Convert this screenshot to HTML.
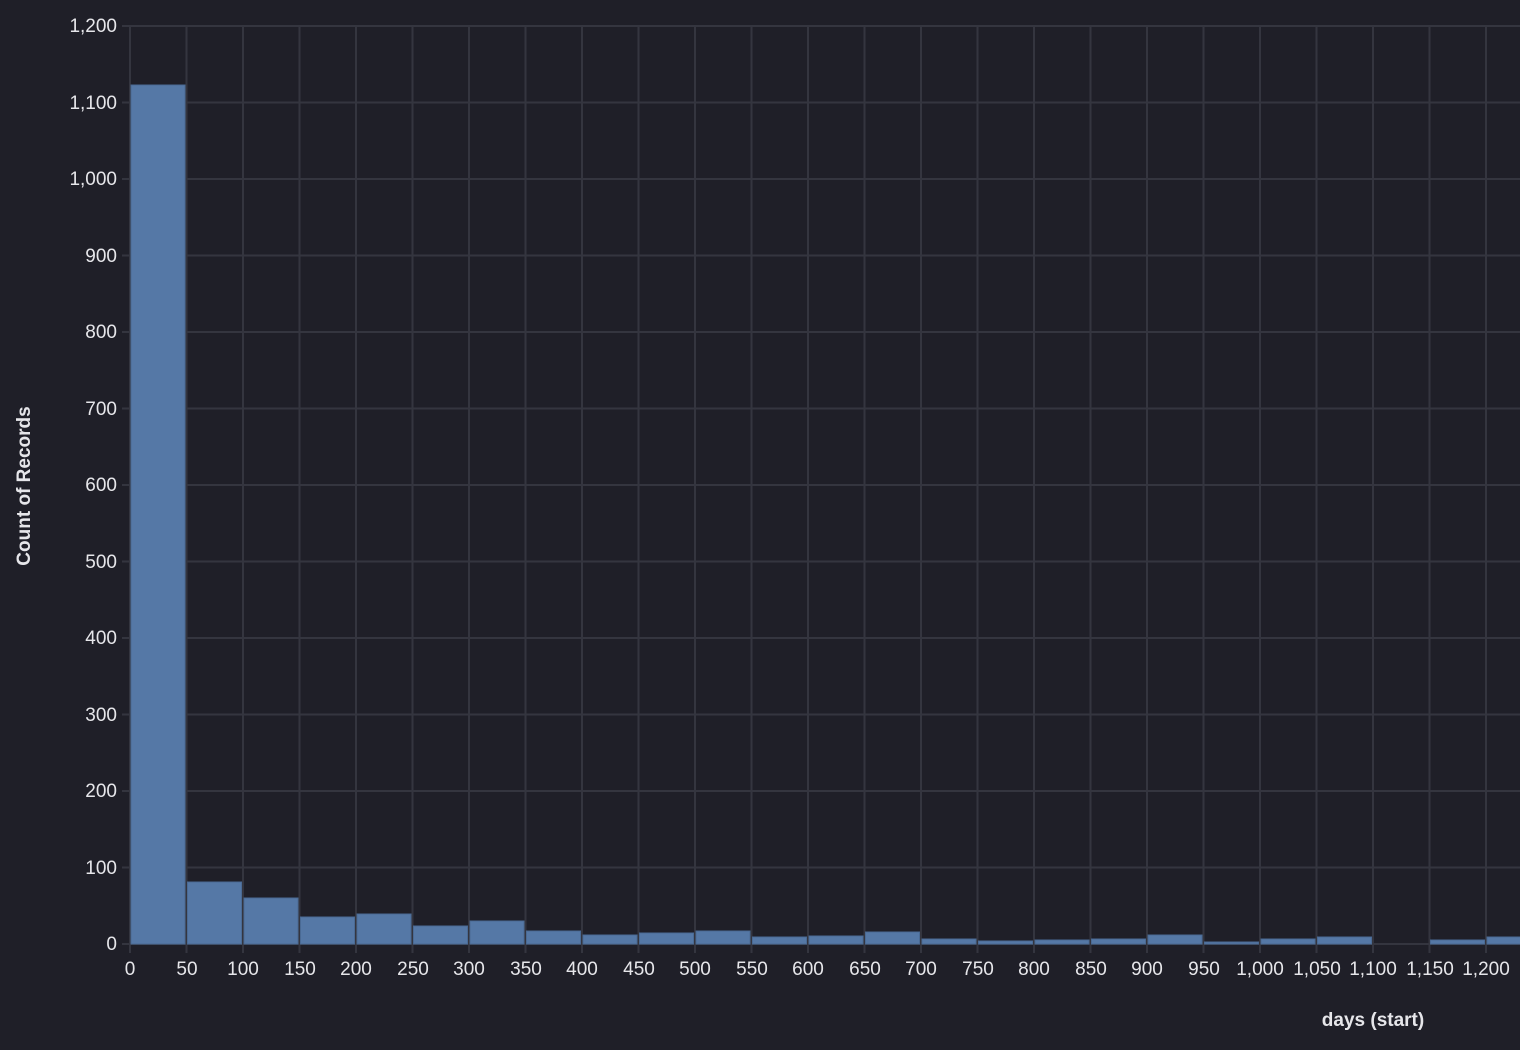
<!DOCTYPE html>
<html><head><style>
html,body{margin:0;padding:0;background:#1f1f28;}
svg{display:block;font-family:"Liberation Sans",sans-serif;}
</style></head><body>
<svg width="1520" height="1050" viewBox="0 0 1520 1050">
<rect width="1520" height="1050" fill="#1f1f28"/>
<g stroke="#34353f" stroke-width="2">
<line x1="130" y1="26" x2="1520" y2="26"/><line x1="130" y1="102.5" x2="1520" y2="102.5"/><line x1="130" y1="179" x2="1520" y2="179"/><line x1="130" y1="255.5" x2="1520" y2="255.5"/><line x1="130" y1="332" x2="1520" y2="332"/><line x1="130" y1="408.5" x2="1520" y2="408.5"/><line x1="130" y1="485" x2="1520" y2="485"/><line x1="130" y1="561.5" x2="1520" y2="561.5"/><line x1="130" y1="638" x2="1520" y2="638"/><line x1="130" y1="714.5" x2="1520" y2="714.5"/><line x1="130" y1="791" x2="1520" y2="791"/><line x1="130" y1="867.5" x2="1520" y2="867.5"/>
<line x1="122" y1="26" x2="130" y2="26"/><line x1="122" y1="102.5" x2="130" y2="102.5"/><line x1="122" y1="179" x2="130" y2="179"/><line x1="122" y1="255.5" x2="130" y2="255.5"/><line x1="122" y1="332" x2="130" y2="332"/><line x1="122" y1="408.5" x2="130" y2="408.5"/><line x1="122" y1="485" x2="130" y2="485"/><line x1="122" y1="561.5" x2="130" y2="561.5"/><line x1="122" y1="638" x2="130" y2="638"/><line x1="122" y1="714.5" x2="130" y2="714.5"/><line x1="122" y1="791" x2="130" y2="791"/><line x1="122" y1="867.5" x2="130" y2="867.5"/><line x1="122" y1="944" x2="1520" y2="944"/>
<line x1="130.0" y1="26" x2="130.0" y2="953"/><line x1="186.5" y1="26" x2="186.5" y2="953"/><line x1="243.0" y1="26" x2="243.0" y2="953"/><line x1="299.5" y1="26" x2="299.5" y2="953"/><line x1="356.0" y1="26" x2="356.0" y2="953"/><line x1="412.5" y1="26" x2="412.5" y2="953"/><line x1="469.0" y1="26" x2="469.0" y2="953"/><line x1="525.5" y1="26" x2="525.5" y2="953"/><line x1="582.0" y1="26" x2="582.0" y2="953"/><line x1="638.5" y1="26" x2="638.5" y2="953"/><line x1="695.0" y1="26" x2="695.0" y2="953"/><line x1="751.5" y1="26" x2="751.5" y2="953"/><line x1="808.0" y1="26" x2="808.0" y2="953"/><line x1="864.5" y1="26" x2="864.5" y2="953"/><line x1="921.0" y1="26" x2="921.0" y2="953"/><line x1="977.5" y1="26" x2="977.5" y2="953"/><line x1="1034.0" y1="26" x2="1034.0" y2="953"/><line x1="1090.5" y1="26" x2="1090.5" y2="953"/><line x1="1147.0" y1="26" x2="1147.0" y2="953"/><line x1="1203.5" y1="26" x2="1203.5" y2="953"/><line x1="1260.0" y1="26" x2="1260.0" y2="953"/><line x1="1316.5" y1="26" x2="1316.5" y2="953"/><line x1="1373.0" y1="26" x2="1373.0" y2="953"/><line x1="1429.5" y1="26" x2="1429.5" y2="953"/><line x1="1486.0" y1="26" x2="1486.0" y2="953"/>
</g>
<g fill="#5578a6" stroke="#4a6a94" stroke-width="1">
<rect x="131" y="85" width="54" height="859"/>
<rect x="187.5" y="882" width="54" height="62"/>
<rect x="244" y="898" width="54" height="46"/>
<rect x="300.5" y="917" width="54" height="27"/>
<rect x="357" y="914" width="54" height="30"/>
<rect x="413.5" y="926" width="54" height="18"/>
<rect x="470" y="921" width="54" height="23"/>
<rect x="526.5" y="931" width="54" height="13"/>
<rect x="583" y="935" width="54" height="9"/>
<rect x="639.5" y="933" width="54" height="11"/>
<rect x="696" y="931" width="54" height="13"/>
<rect x="752.5" y="937" width="54" height="7"/>
<rect x="809" y="936" width="54" height="8"/>
<rect x="865.5" y="932" width="54" height="12"/>
<rect x="922" y="939" width="54" height="5"/>
<rect x="978.5" y="941" width="54" height="3"/>
<rect x="1035" y="940" width="54" height="4"/>
<rect x="1091.5" y="939" width="54" height="5"/>
<rect x="1148" y="935" width="54" height="9"/>
<rect x="1204.5" y="942" width="54" height="2"/>
<rect x="1261" y="939" width="54" height="5"/>
<rect x="1317.5" y="937" width="54" height="7"/>
<rect x="1430.5" y="940" width="54" height="4"/>
<rect x="1487" y="937" width="54" height="7"/>
</g>
<g fill="#e6e6ea" font-size="19" text-anchor="end">
<text x="117" y="32">1,200</text><text x="117" y="109">1,100</text><text x="117" y="185">1,000</text><text x="117" y="262">900</text><text x="117" y="338">800</text><text x="117" y="415">700</text><text x="117" y="491">600</text><text x="117" y="568">500</text><text x="117" y="644">400</text><text x="117" y="721">300</text><text x="117" y="797">200</text><text x="117" y="874">100</text><text x="117" y="950">0</text>
</g>
<g fill="#e6e6ea" font-size="19" text-anchor="middle">
<text x="130" y="975">0</text><text x="187" y="975">50</text><text x="243" y="975">100</text><text x="300" y="975">150</text><text x="356" y="975">200</text><text x="413" y="975">250</text><text x="469" y="975">300</text><text x="526" y="975">350</text><text x="582" y="975">400</text><text x="639" y="975">450</text><text x="695" y="975">500</text><text x="752" y="975">550</text><text x="808" y="975">600</text><text x="865" y="975">650</text><text x="921" y="975">700</text><text x="978" y="975">750</text><text x="1034" y="975">800</text><text x="1091" y="975">850</text><text x="1147" y="975">900</text><text x="1204" y="975">950</text><text x="1260" y="975">1,000</text><text x="1317" y="975">1,050</text><text x="1373" y="975">1,100</text><text x="1430" y="975">1,150</text><text x="1486" y="975">1,200</text><text x="1524" y="975">1</text>
</g>
<text x="1373" y="1026" fill="#e6e6ea" font-size="19" font-weight="bold" text-anchor="middle">days (start)</text>
<text transform="translate(30,486) rotate(-90)" fill="#e6e6ea" font-size="19" font-weight="bold" text-anchor="middle">Count of Records</text>
</svg>
</body></html>
